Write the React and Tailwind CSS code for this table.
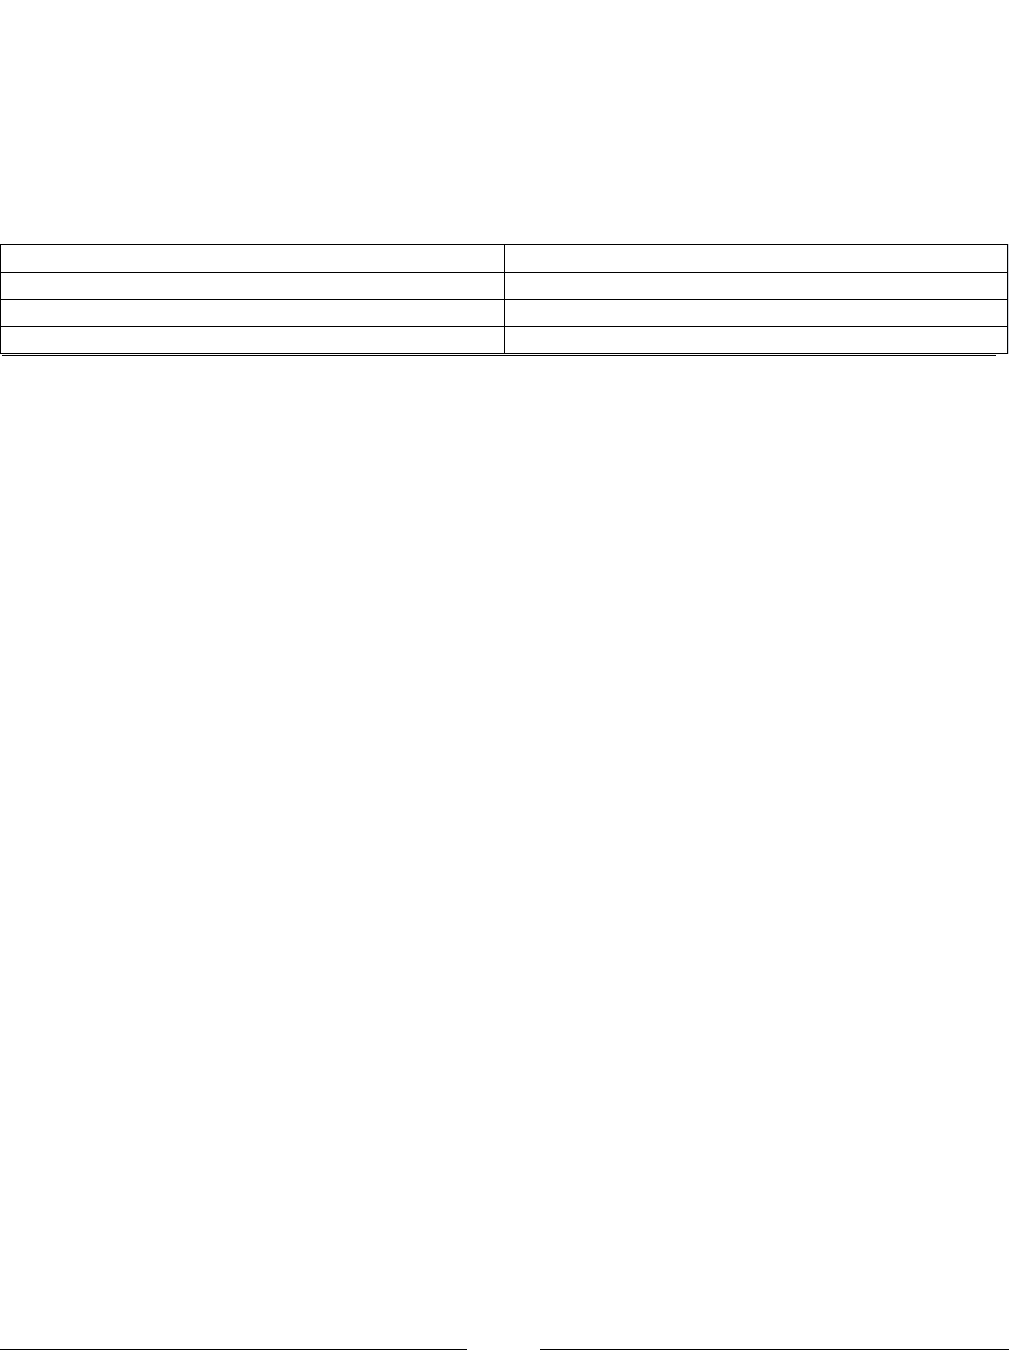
export default function App() {
    const rows = [
        { id: 0, h: 'h-[28px]' },
        { id: 1, h: 'h-[27px]' },
        { id: 2, h: 'h-[27px]' },
        { id: 3, h: 'h-[27px]' },
    ];

    return (
        <div className="h-[1351px] bg-white flex flex-col font-['Liberation_Sans',Arial,sans-serif] text-sm text-black overflow-hidden">
            {/* Blank header area */}
            <div className="h-[244px]"></div>

            {/* Details table */}
            <div className="flex">
                <table className="w-[1008px] border-collapse table-fixed">
                    <tbody>
                        {rows.map((r) => (
                            <tr key={r.id} className={r.h}>
                                <td className="w-[504px] border border-black p-0"></td>
                                <td className="border border-black p-0"></td>
                            </tr>
                        ))}
                    </tbody>
                </table>
                <div className="w-px bg-gray-300"></div>
            </div>
            <div className="ml-[2px] w-[994px] mt-px border-t border-black"></div>

            {/* Signature lines */}
            <div className="mt-auto flex justify-between items-end pb-px">
                <div className="w-[467px] border-t border-black"></div>
                <div className="w-[469px] border-t border-black"></div>
            </div>
        </div>
    );
}
